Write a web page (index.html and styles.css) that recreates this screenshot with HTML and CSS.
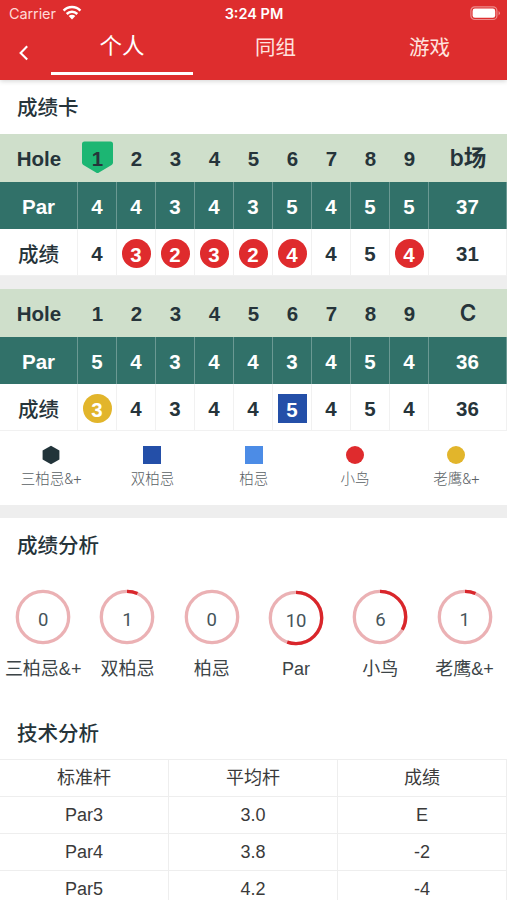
FILE: index.html
```html
<!DOCTYPE html>
<html lang="zh-CN">
<head>
<meta charset="utf-8">
<title>成绩卡</title>
<link rel="stylesheet" href="styles.css">
</head>
<body>
<header class="header">
  <div class="status">
    <div class="carrier"><span>Carrier</span>
      <svg width="20" height="16" viewBox="0 0 20 16"><g fill="none" stroke="#fff" stroke-width="2.5"><path d="M1.6 5.6C6.2 .9 13.8 .9 18.4 5.6"/><path d="M4.7 9C7.7 6 12.3 6 15.3 9"/></g><path fill="#fff" d="M6.7 11.1C8.6 9.3 11.4 9.3 13.3 11.1L10 14.4Z"/></svg>
    </div>
    <div class="time">3:24 PM</div>
    <svg class="battery" width="31" height="15" viewBox="0 0 31 15"><rect x=".9" y=".9" width="26" height="12.6" rx="3.8" fill="none" stroke="#fff" stroke-opacity=".45" stroke-width="1.2"/><rect x="2.6" y="2.6" width="22.6" height="9.2" rx="2.3" fill="#fff"/><path d="M28.6 5q2.6 2.2 0 4.4z" fill="#fff" fill-opacity=".5"/></svg>
  </div>
  <nav class="tabs">
    <svg class="back" width="12" height="18" viewBox="0 0 12 18"><path d="M9.2 2.2 2.6 8.9l6.6 6.7" fill="none" stroke="#fff" stroke-width="2.1"/></svg>
    <div class="tab active">个人</div>
    <div class="tab">同组</div>
    <div class="tab">游戏</div>
  </nav>
</header>
<main>
  <h2 class="title">成绩卡</h2>
  <section class="card">
    <div class="row hole"><b>Hole</b><b class="flag"><svg width="31" height="33" viewBox="0 0 31 33"><path d="M2.5 .5h26Q31 .5 31 3v18.500q0 1.600-1.400 2.500L17 31.600q-1.500 1-3 0L1.400 24Q0 23.100 0 21.500V3Q0 .5 2.500 .5z" fill="#1cb673"/></svg><span>1</span></b><b>2</b><b>3</b><b>4</b><b>5</b><b>6</b><b>7</b><b>8</b><b>9</b><b class="course">b场</b></div>
    <div class="row par"><b>Par</b><b>4</b><b>4</b><b>3</b><b>4</b><b>3</b><b>5</b><b>4</b><b>5</b><b>5</b><b>37</b></div>
    <div class="row score"><b class="cn">成绩</b><b>4</b><b><i class="mark">3</i></b><b><i class="mark">2</i></b><b><i class="mark">3</i></b><b><i class="mark">2</i></b><b><i class="mark">4</i></b><b>4</b><b>5</b><b><i class="mark">4</i></b><b>31</b></div>
  </section>
  <div class="gap"></div>
  <section class="card">
    <div class="row hole"><b>Hole</b><b>1</b><b>2</b><b>3</b><b>4</b><b>5</b><b>6</b><b>7</b><b>8</b><b>9</b><b class="course">C</b></div>
    <div class="row par"><b>Par</b><b>5</b><b>4</b><b>3</b><b>4</b><b>4</b><b>3</b><b>4</b><b>5</b><b>4</b><b>36</b></div>
    <div class="row score"><b class="cn">成绩</b><b><i class="mark eagle">3</i></b><b>4</b><b>3</b><b>4</b><b>4</b><b><i class="mark double">5</i></b><b>4</b><b>5</b><b>4</b><b>36</b></div>
  </section>
  <section class="legend">
    <div><svg width="18" height="20" viewBox="0 0 18 20"><path d="M9 .8 17.400 5.400v9.200L9 19.200.6 14.600V5.400z" fill="#22343a"/></svg><span>三柏忌&amp;+</span></div>
    <div><svg width="18" height="20" viewBox="0 0 18 20"><path d="M0 1h18v18H0z" fill="#244fa8"/></svg><span>双柏忌</span></div>
    <div><svg width="18" height="20" viewBox="0 0 18 20"><path d="M0 1h18v18H0z" fill="#4c8ce6"/></svg><span>柏忌</span></div>
    <div><svg width="18" height="20" viewBox="0 0 18 20"><circle cx="9" cy="10" r="9" fill="#df2b2d"/></svg><span>小鸟</span></div>
    <div><svg width="18" height="20" viewBox="0 0 18 20"><circle cx="9" cy="10" r="9" fill="#e2b52b"/></svg><span>老鹰&amp;+</span></div>
  </section>
  <div class="gap"></div>
  <h2 class="title">成绩分析</h2>
  <section class="rings">
    <div class="stat"><div class="ring"><svg viewBox="0 0 56 56"><circle cx="28" cy="28" r="25.700"/></svg><span>0</span></div><p>三柏忌&amp;+</p></div>
    <div class="stat"><div class="ring"><svg viewBox="0 0 56 56"><circle cx="28" cy="28" r="25.700"/><circle class="arc" cx="28" cy="28" r="25.700" pathLength="18" stroke-dasharray="1.200 18"/></svg><span>1</span></div><p>双柏忌</p></div>
    <div class="stat"><div class="ring"><svg viewBox="0 0 56 56"><circle cx="28" cy="28" r="25.700"/></svg><span>0</span></div><p>柏忌</p></div>
    <div class="stat"><div class="ring low"><svg viewBox="0 0 56 56"><circle cx="28" cy="28" r="25.700"/><circle class="arc" cx="28" cy="28" r="25.700" pathLength="18" stroke-dasharray="10 18"/></svg><span>10</span></div><p>Par</p></div>
    <div class="stat"><div class="ring"><svg viewBox="0 0 56 56"><circle cx="28" cy="28" r="25.700"/><circle class="arc" cx="28" cy="28" r="25.700" pathLength="18" stroke-dasharray="6 18"/></svg><span>6</span></div><p>小鸟</p></div>
    <div class="stat"><div class="ring"><svg viewBox="0 0 56 56"><circle cx="28" cy="28" r="25.700"/><circle class="arc" cx="28" cy="28" r="25.700" pathLength="18" stroke-dasharray="1.200 18"/></svg><span>1</span></div><p>老鹰&amp;+</p></div>
  </section>
  <h2 class="title tech">技术分析</h2>
  <section class="table">
    <div>标准杆</div><div>平均杆</div><div>成绩</div>
    <div>Par3</div><div>3.0</div><div>E</div>
    <div>Par4</div><div>3.8</div><div>-2</div>
    <div>Par5</div><div>4.2</div><div>-4</div>
  </section>
</main>
</body>
</html>
```
FILE: styles.css
```css
* { box-sizing: border-box; }
body {
  margin: 0;
  width: 507px;
  height: 900px;
  overflow: hidden;
  background: #fff;
  color: #26343a;
  font-family: "Liberation Sans", "Noto Sans CJK SC", sans-serif;
}
svg { display: block; flex: none; }

.header {
  position: relative;
  height: 80px;
  background: #de2d2e;
  color: #fff;
  box-shadow: 0 1px 5px rgba(0, 0, 0, .18);
}
.status {
  height: 27px;
  padding: 0 5px 0 9px;
  display: grid;
  grid-template-columns: 1fr auto 1fr;
  align-items: center;
  font: 14.500px/27px Inter, sans-serif;
}
.carrier { display: flex; align-items: center; gap: 6px; }
.carrier span { color: #ffd9d6; letter-spacing: -.1px; }
.carrier svg { margin-top: -1px; }
.time { font-weight: 600; font-size: 14.500px; padding-right: 3px; }
.battery { justify-self: end; margin-right: 1px; }

.tabs {
  display: grid;
  grid-template-columns: 46px 153px 153px 155px;
  height: 53px;
}
.back { margin: 17px 0 0 18px; }
.tab {
  height: 48px;
  text-align: center;
  font-size: 20.500px;
  line-height: 41px;
  color: #ffe3df;
}
.tab.active {
  width: 142px;
  margin-left: 5px;
  font-size: 22.500px;
  line-height: 39px;
  color: #fff;
  border-bottom: 3px solid #fff;
}

.title {
  margin: 0;
  height: 54px;
  padding-left: 17px;
  font: 500 20.500px/53px "Noto Sans CJK SC", sans-serif;
}
.row {
  display: grid;
  grid-template-columns: 78px repeat(9, 39px) 78px;
  grid-template-rows: 100%;
  height: 47px;
  font-size: 20.500px;
  line-height: 50px;
}
.row > b { display: flex; justify-content: center; border-right: 1px solid transparent; }
.row.hole { background: #cfdfcb; height: 48px; }
.row.hole > b { border: 0; }
.row.par { background: #317169; color: #fff; }
.row.par > b { border-color: #6b9993; }
.row.score > b { border-color: #f1f1f1; border-bottom: 1px solid #f1f1f1; }
.row .cn { font-weight: 500; font-family: "Noto Sans CJK SC", sans-serif; line-height: 48px; }
.row .course { font-size: 22.500px; font-weight: 600; font-family: Inter, "Noto Sans CJK SC", sans-serif; line-height: 48px; }
.row.hole .flag { position: relative; }
.flag svg { position: absolute; top: 7px; left: 4px; }
.flag span { position: relative; }
.mark {
  flex: none;
  width: 29px;
  height: 29px;
  margin-top: 10px;
  border-radius: 50%;
  background: #df2b2d;
  color: #fff;
  font-style: normal;
  line-height: 31px;
  text-align: center;
}
.mark.eagle { background: #e2b52b; }
.mark.double { background: #244fa8; border-radius: 0; }
.gap { height: 13px; background: #eee; }

.legend {
  display: grid;
  grid-template-columns: repeat(5, 101.300px);
  height: 74px;
  padding: 14px 0 0 .5px;
  font: 300 14.500px/22px Roboto, "Noto Sans CJK SC", sans-serif;
  color: #596165;
}
.legend div { display: flex; flex-direction: column; align-items: center; gap: 4px; }

.rings { display: grid; grid-template-columns: repeat(6, 84.300px); padding-left: 1px; height: 138px; }
.stat { display: flex; flex-direction: column; align-items: center; }
.ring { position: relative; width: 56px; height: 56px; margin-top: 17px; }
.ring.low { top: 1px; }
.ring svg { width: 56px; height: 56px; }
.ring circle { fill: none; stroke: #ebb1b4; stroke-width: 3.300; }
.ring .arc { stroke: #d9262b; transform: rotate(-90deg); transform-origin: center; }
.ring span {
  position: absolute;
  inset: 3px 0 0;
  text-align: center;
  font: 18.500px/56px Roboto, sans-serif;
  color: #46545a;
}
.stat p {
  margin: 10px -10px 0;
  font: 400 18px/28px "Liberation Sans", "Noto Sans CJK SC", sans-serif;
  color: #3c4447;
  white-space: nowrap;
}
.title.tech { height: 49px; line-height: 44px; }
.table {
  display: grid;
  grid-template-columns: repeat(3, 169px);
  border-top: 1px solid #eee;
  font-size: 18px;
  color: #3a3a3a;
}
.table div {
  height: 37.100px;
  line-height: 37px;
  text-align: center;
  border-right: 1px solid #eee;
  border-bottom: 1px solid #eee;
}
```
